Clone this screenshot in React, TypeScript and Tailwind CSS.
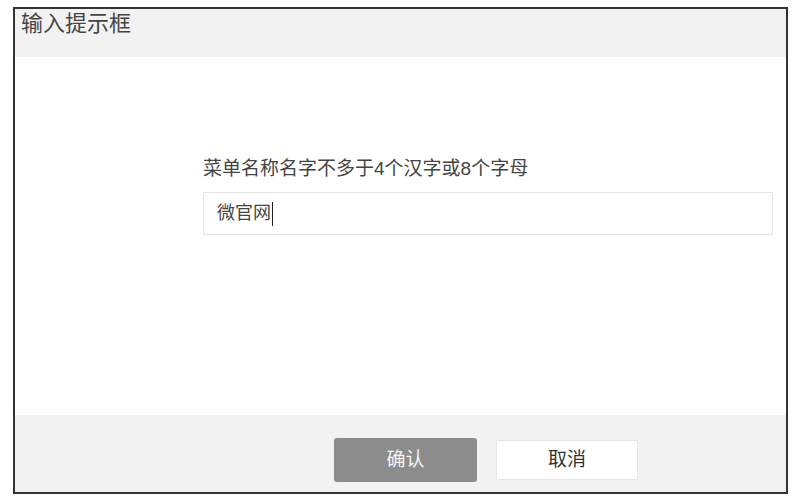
const App = () => {
  return (
    <div
      className="w-[800px] h-[502px] bg-white pt-[7px] pl-[13px]"
      style={{ fontFamily: '"Liberation Sans", "Noto Sans CJK SC", sans-serif' }}
    >
      {/* Dialog frame */}
      <div className="w-[775px] h-[487px] border-2 border-[#333] flex flex-col">
        {/* Header */}
        <div className="h-[48px] bg-[#f2f2f2] pl-[6px]">
          <h1 className="text-[22px] leading-[30px] text-[#444]">输入提示框</h1>
        </div>

        {/* Body */}
        <div className="flex-1 bg-white pt-[100px] pl-[188px] pr-[13px]">
          <p className="text-[19px] leading-[24px] text-[#444]">
            菜单名称名字不多于4个汉字或8个字母
          </p>
          <div className="mt-[11px] h-[43px] border border-[#e3e3e3] bg-white flex items-center pl-[13px]">
            <span className="text-[18px] text-[#444]">微官网</span>
            <span className="ml-[1px] w-[1px] h-[24px] bg-[#222]" />
          </div>
        </div>

        {/* Footer */}
        <div className="h-[77px] bg-[#f2f2f2] flex items-start pt-[23px] pl-[319px] gap-[19px]">
          <button className="w-[143px] h-[44px] rounded-[3px] bg-[#8c8c8c] text-[19px] text-[#f5f5f5]">
            确认
          </button>
          <button className="mt-[2px] w-[142px] h-[40px] rounded-[2px] bg-white border border-[#e6e6e6] text-[19px] text-[#333]">
            取消
          </button>
        </div>
      </div>
    </div>
  );
};

export default App;
